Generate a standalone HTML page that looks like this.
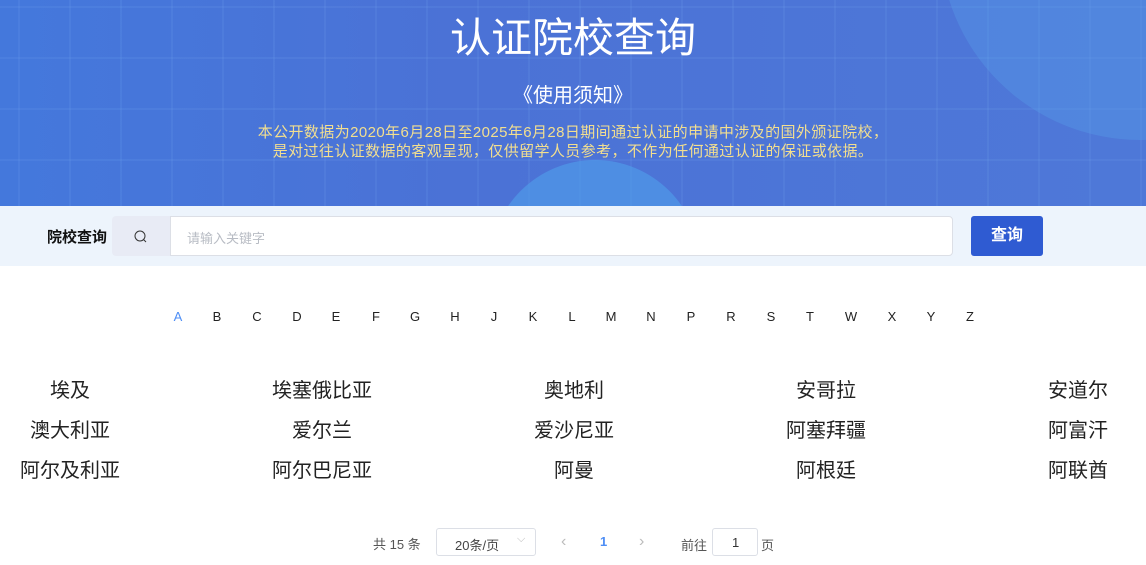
<!DOCTYPE html>
<html><head><meta charset="utf-8"><style>
*{margin:0;padding:0;box-sizing:border-box}
body{width:1146px;height:565px;overflow:hidden;background:#fff;font-family:"Liberation Sans","Noto Sans CJK SC",sans-serif;position:relative}
.hero{position:absolute;left:0;top:0;width:1146px;height:206px;overflow:hidden;
background:linear-gradient(90deg,#4478dc 0%,#4b72d6 40%,#4e78d8 100%)}
.grid{position:absolute;inset:0;background-image:linear-gradient(90deg,rgba(120,170,240,.13) 2px,transparent 2px),linear-gradient(0deg,rgba(120,170,240,.13) 2px,transparent 2px);background-size:51px 51px;background-position:18px 8px}
.c1{position:absolute;left:490px;top:160px;width:210px;height:210px;border-radius:50%;background:rgba(80,160,235,.6)}
.c2{position:absolute;left:940px;top:-260px;width:400px;height:400px;border-radius:50%;background:rgba(90,160,235,.35)}
.t1{position:absolute;top:12px;width:100%;text-align:center;color:#fff;font-size:41px;line-height:52px}
.t2{position:absolute;top:79px;width:100%;text-align:center;color:#fff;font-size:20px}
.t3{position:absolute;top:123px;width:100%;text-align:center;color:#f3df8f;font-size:15px;line-height:19px;letter-spacing:.4px}
.bar{position:absolute;top:206px;left:0;width:1146px;height:60px;background:#edf4fc}
.lab{position:absolute;left:47px;top:226px;font-size:15px;font-weight:bold;color:#111}
.ib{position:absolute;left:112px;top:216px;width:58px;height:40px;background:#e8ebf5;border-radius:4px 0 0 4px}
.inp{position:absolute;left:170px;top:216px;width:783px;height:40px;background:#fff;border:1px solid #dcdfe6;border-radius:0 4px 4px 0;color:#b8bcc4;font-size:13px;padding:11px 0 0 16px}
.btn{position:absolute;left:971px;top:216px;width:72px;height:40px;background:#2f5bd2;color:#fff;border-radius:3px;font-size:16px;font-weight:bold;text-align:center;line-height:40px}
.let{position:absolute;top:309px;font-size:13px;color:#222;width:20px;text-align:center;margin-left:-10px}
.co{position:absolute;font-size:20px;color:#222;width:200px;text-align:center;margin-left:-100px}
.pg{position:absolute;font-size:13px;color:#555}
.box{position:absolute;border:1px solid #dcdfe6;border-radius:3px;background:#fff}
</style></head><body>
<div class="hero"><div class="grid"></div><div class="c1"></div><div class="c2"></div>
<div class="t1">认证院校查询</div>
<div class="t2">《使用须知》</div>
<div class="t3">本公开数据为2020年6月28日至2025年6月28日期间通过认证的申请中涉及的国外颁证院校，<br>是对过往认证数据的客观呈现，仅供留学人员参考，不作为任何通过认证的保证或依据。</div>
</div>
<div class="bar"></div>
<div class="lab">院校查询</div>
<div class="ib"><svg width="58" height="40"><circle cx="28" cy="20" r="5" fill="none" stroke="#333" stroke-width="1"/><path d="M31.5 23.5l2.5 2.5" stroke="#333" stroke-width="1"/></svg></div>
<div class="inp">请输入关键字</div>
<div class="btn">查询</div>
<div class="let" style="left:178px;color:#4e8ef5">A</div><div class="let" style="left:217px">B</div><div class="let" style="left:257px">C</div><div class="let" style="left:297px">D</div><div class="let" style="left:336px">E</div><div class="let" style="left:376px">F</div><div class="let" style="left:415px">G</div><div class="let" style="left:455px">H</div><div class="let" style="left:494px">J</div><div class="let" style="left:533px">K</div><div class="let" style="left:572px">L</div><div class="let" style="left:611px">M</div><div class="let" style="left:651px">N</div><div class="let" style="left:691px">P</div><div class="let" style="left:731px">R</div><div class="let" style="left:771px">S</div><div class="let" style="left:810px">T</div><div class="let" style="left:851px">W</div><div class="let" style="left:892px">X</div><div class="let" style="left:931px">Y</div><div class="let" style="left:970px">Z</div>
<div class="co" style="left:70px;top:374px">埃及</div><div class="co" style="left:322px;top:374px">埃塞俄比亚</div><div class="co" style="left:574px;top:374px">奥地利</div><div class="co" style="left:826px;top:374px">安哥拉</div><div class="co" style="left:1078px;top:374px">安道尔</div>
<div class="co" style="left:70px;top:414px">澳大利亚</div><div class="co" style="left:322px;top:414px">爱尔兰</div><div class="co" style="left:574px;top:414px">爱沙尼亚</div><div class="co" style="left:826px;top:414px">阿塞拜疆</div><div class="co" style="left:1078px;top:414px">阿富汗</div>
<div class="co" style="left:70px;top:454px">阿尔及利亚</div><div class="co" style="left:322px;top:454px">阿尔巴尼亚</div><div class="co" style="left:574px;top:454px">阿曼</div><div class="co" style="left:826px;top:454px">阿根廷</div><div class="co" style="left:1078px;top:454px">阿联酋</div>
<div class="pg" style="left:373px;top:534px">共 15 条</div>
<div class="box" style="left:436px;top:528px;width:100px;height:28px"></div>
<div class="pg" style="left:455px;top:535px;color:#444">20条/页</div>
<div class="pg" style="left:517px;top:533px;color:#bbb;font-size:11px">⌵</div>
<div class="pg" style="left:561px;top:533px;color:#bbb;font-size:16px">‹</div>
<div class="pg" style="left:600px;top:534px;color:#4e8ef5;font-weight:bold">1</div>
<div class="pg" style="left:639px;top:533px;color:#bbb;font-size:16px">›</div>
<div class="pg" style="left:681px;top:535px">前往</div>
<div class="box" style="left:712px;top:528px;width:46px;height:28px"></div>
<div class="pg" style="left:732px;top:535px;color:#333">1</div>
<div class="pg" style="left:761px;top:535px">页</div>
</body></html>
